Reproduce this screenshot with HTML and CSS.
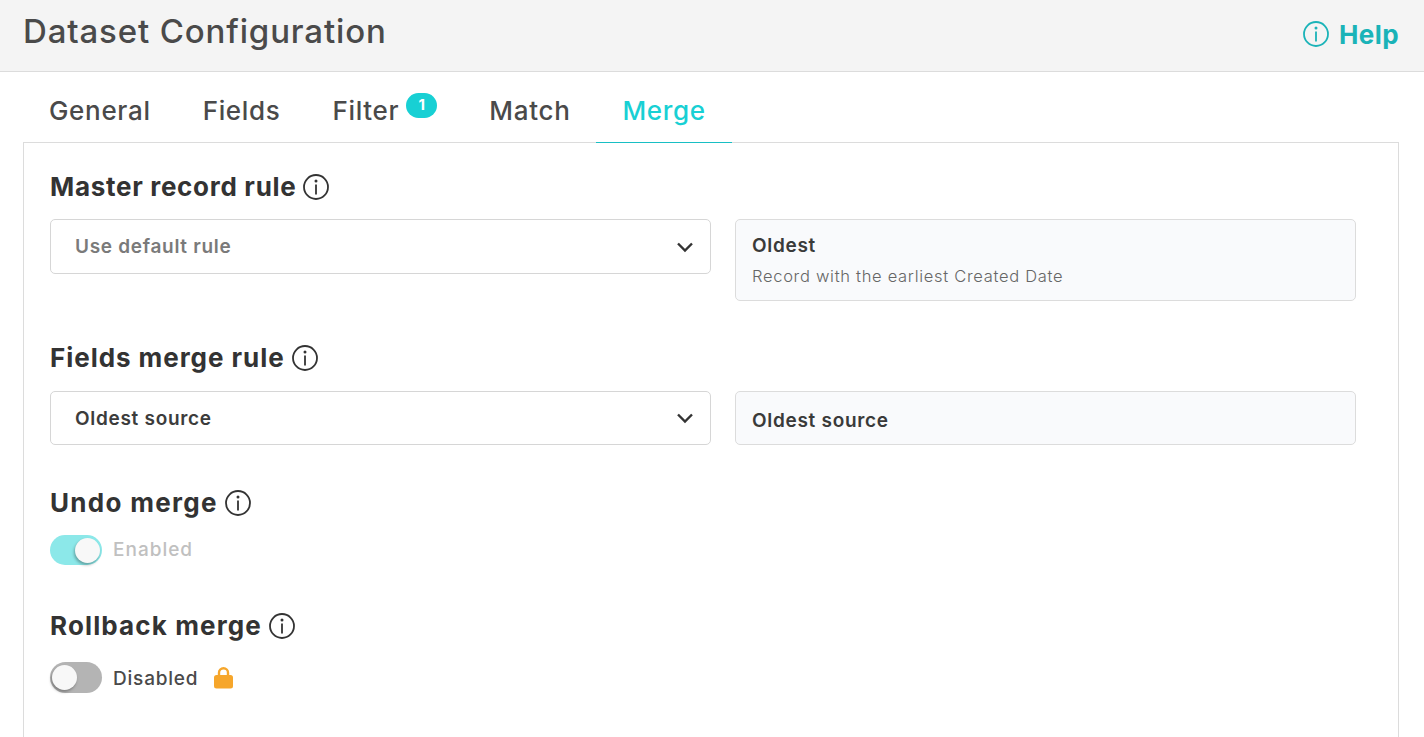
FILE: index.html
```html
<!DOCTYPE html>
<html lang="en">
<head>
<meta charset="utf-8">
<title>Dataset Configuration</title>
<link rel="stylesheet" href="styles.css">
</head>
<body>
<svg class="defs" width="0" height="0" aria-hidden="true">
  <symbol id="info" viewBox="0 0 26 26">
    <circle cx="13" cy="13" r="12" fill="none" stroke="currentColor" stroke-width="1.8"/>
    <circle cx="13" cy="6.900" r="1.500" fill="currentColor"/>
    <path d="M13 10.500v10" fill="none" stroke="currentColor" stroke-width="1.800"/>
  </symbol>
  <symbol id="chev" viewBox="0 0 18 12">
    <path d="M2 2.500l7 7 7-7" fill="none" stroke="currentColor" stroke-width="2.400"/>
  </symbol>
</svg>
<header class="topbar">
  <h1 class="title">Dataset Configuration</h1>
  <a class="help"><svg class="help-icon"><use href="#info"/></svg><span>Help</span></a>
</header>
<nav class="tabs">
  <span class="tab">General</span>
  <span class="tab">Fields</span>
  <span class="tab tab-filter">Filter<span class="badge">1</span></span>
  <span class="tab">Match</span>
  <span class="tab tab-active">Merge</span>
</nav>
<main class="panel">
  <section class="sec sec-master">
    <h2 class="head">Master record rule <svg class="info"><use href="#info"/></svg></h2>
    <div class="row">
      <div class="select select-muted"><span>Use default rule</span><svg class="chev"><use href="#chev"/></svg></div>
      <div class="note note-tall">
        <div class="note-title">Oldest</div>
        <div class="note-sub">Record with the earliest Created Date</div>
      </div>
    </div>
  </section>
  <section class="sec sec-fields">
    <h2 class="head">Fields merge rule <svg class="info"><use href="#info"/></svg></h2>
    <div class="row">
      <div class="select select-short"><span>Oldest source</span><svg class="chev"><use href="#chev"/></svg></div>
      <div class="note note-short"><div class="note-title">Oldest source</div></div>
    </div>
  </section>
  <section class="sec sec-undo">
    <h2 class="head">Undo merge <svg class="info"><use href="#info"/></svg></h2>
    <div class="toggle-row">
      <span class="switch switch-on"><span class="knob"></span></span>
      <span class="toggle-label label-off">Enabled</span>
    </div>
  </section>
  <section class="sec sec-rollback">
    <h2 class="head">Rollback merge <svg class="info"><use href="#info"/></svg></h2>
    <div class="toggle-row">
      <span class="switch switch-off"><span class="knob"></span></span>
      <span class="toggle-label label-disabled">Disabled</span>
      <svg class="lock" viewBox="0 0 19 22"><path d="M5 10V5.700a4.500 4.500 0 0 1 9 0V10" fill="none" stroke="#f6a62b" stroke-width="2.400"/><rect x="0" y="8" width="19" height="13.500" rx="2.500" fill="#f6a62b"/></svg>
    </div>
  </section>
</main>
</body>
</html>
```
FILE: styles.css
```css
* { box-sizing: border-box; }
html, body { margin: 0; height: 737px; overflow: hidden; }
body { background: #fff; font-family: Inter, "Open Sans", sans-serif; color: #333; }
.defs { position: absolute; }
.topbar { height: 72px; background: #f4f4f4; border-bottom: 1px solid #dcdcdc; display: flex; justify-content: space-between; padding: 0 25px 0 23px; }
.title { margin: 10px 0 0; font-size: 33px; line-height: 42px; font-weight: 500; letter-spacing: 0.85px; color: #4a4a4a; }
.help { display: flex; align-items: center; gap: 10px; height: 68px; color: #1ab3b8; font-size: 26px; font-weight: 700; letter-spacing: 0.4px; }
.help-icon { width: 26px; height: 26px; }
.tabs { display: flex; height: 70px; padding-left: 23px; }
.tab { padding: 0 26px; height: 71px; line-height: 77px; font-size: 26px; font-weight: 500; letter-spacing: 0.68px; color: #4a4a4a; position: relative; }
.tab-filter { padding-right: 64px; }
.tab-active { color: #18d0d4; border-bottom: 1px solid #18bfc4; }
.badge { position: absolute; top: 21px; right: 26px; width: 31px; height: 25px; border-radius: 13px; background: #18d0d4; color: #fff; font-size: 15px; font-weight: 700; line-height: 24px; text-align: center; letter-spacing: 0; }
.panel { margin: 0 25px 0 23px; height: 600px; border: 1px solid #dcdcdc; padding: 0 42px 0 26px; }
.sec-master { padding-top: 25px; }
.sec-fields { margin-top: 38px; }
.sec-undo { margin-top: 39px; }
.sec-rollback { margin-top: 42px; }
.head { margin: 0; display: flex; align-items: center; gap: 7px; height: 37px; font-size: 26px; font-weight: 700; letter-spacing: 0.7px; color: #333; }
.sec-fields .head { letter-spacing: 0.95px; }
.sec-undo .head { letter-spacing: 1.3px; }
.sec-rollback .head { letter-spacing: 1.13px; }
.info { width: 26px; height: 26px; color: #333; }
.row { display: grid; grid-template-columns: 661px 621px; gap: 24px; align-items: start; margin-top: 14px; }
.sec-fields .row { margin-top: 15px; }
.select { height: 55px; border: 1px solid #d6d6d6; border-radius: 5px; padding: 0 16px 0 24px; display: flex; align-items: center; justify-content: space-between; font-size: 19px; font-weight: 600; letter-spacing: 0.7px; color: #3c3c3c; }
.select-short { height: 54px; }
.select-muted { color: #7a7a7a; }
.chev { width: 18px; height: 12px; color: #333; }
.note { background: #f9fafc; border: 1px solid #dcdcdc; border-radius: 5px; padding: 0 16px; }
.note-tall { height: 82px; padding-top: 14px; }
.note-short { height: 54px; padding-top: 17px; }
.note-title { font-size: 19px; font-weight: 600; line-height: 24px; letter-spacing: 0.7px; color: #3a3a3a; }
.note-sub { font-size: 16.500px; font-weight: 300; line-height: 20px; margin-top: 8px; letter-spacing: 0.7px; color: #666; }
.toggle-row { display: flex; align-items: center; margin-top: 14px; }
.sec-rollback .toggle-row { margin-top: 18px; }
.switch { display: block; width: 52px; height: 30px; border-radius: 15px; position: relative; flex: none; }
.switch-on { background: #8ce8e9; }
.switch-off { background: #b4b4b4; height: 31px; border-radius: 16px; }
.knob { position: absolute; top: 3px; width: 25px; height: 25px; border-radius: 50%; background: #f8f8f8; box-shadow: -1px 2px 3px rgba(0,0,0,.3); }
.switch-on .knob { right: 2px; }
.switch-off .knob { left: 2px; }
.toggle-label { margin-left: 11px; font-size: 19px; font-weight: 500; letter-spacing: 1px; color: #4a4a4a; }
.label-off { color: #c0c0c0; padding-bottom: 2px; }
.label-disabled { letter-spacing: 0.8px; padding-top: 2px; }
.lock { width: 19px; height: 22px; margin-left: 16px; }
```
